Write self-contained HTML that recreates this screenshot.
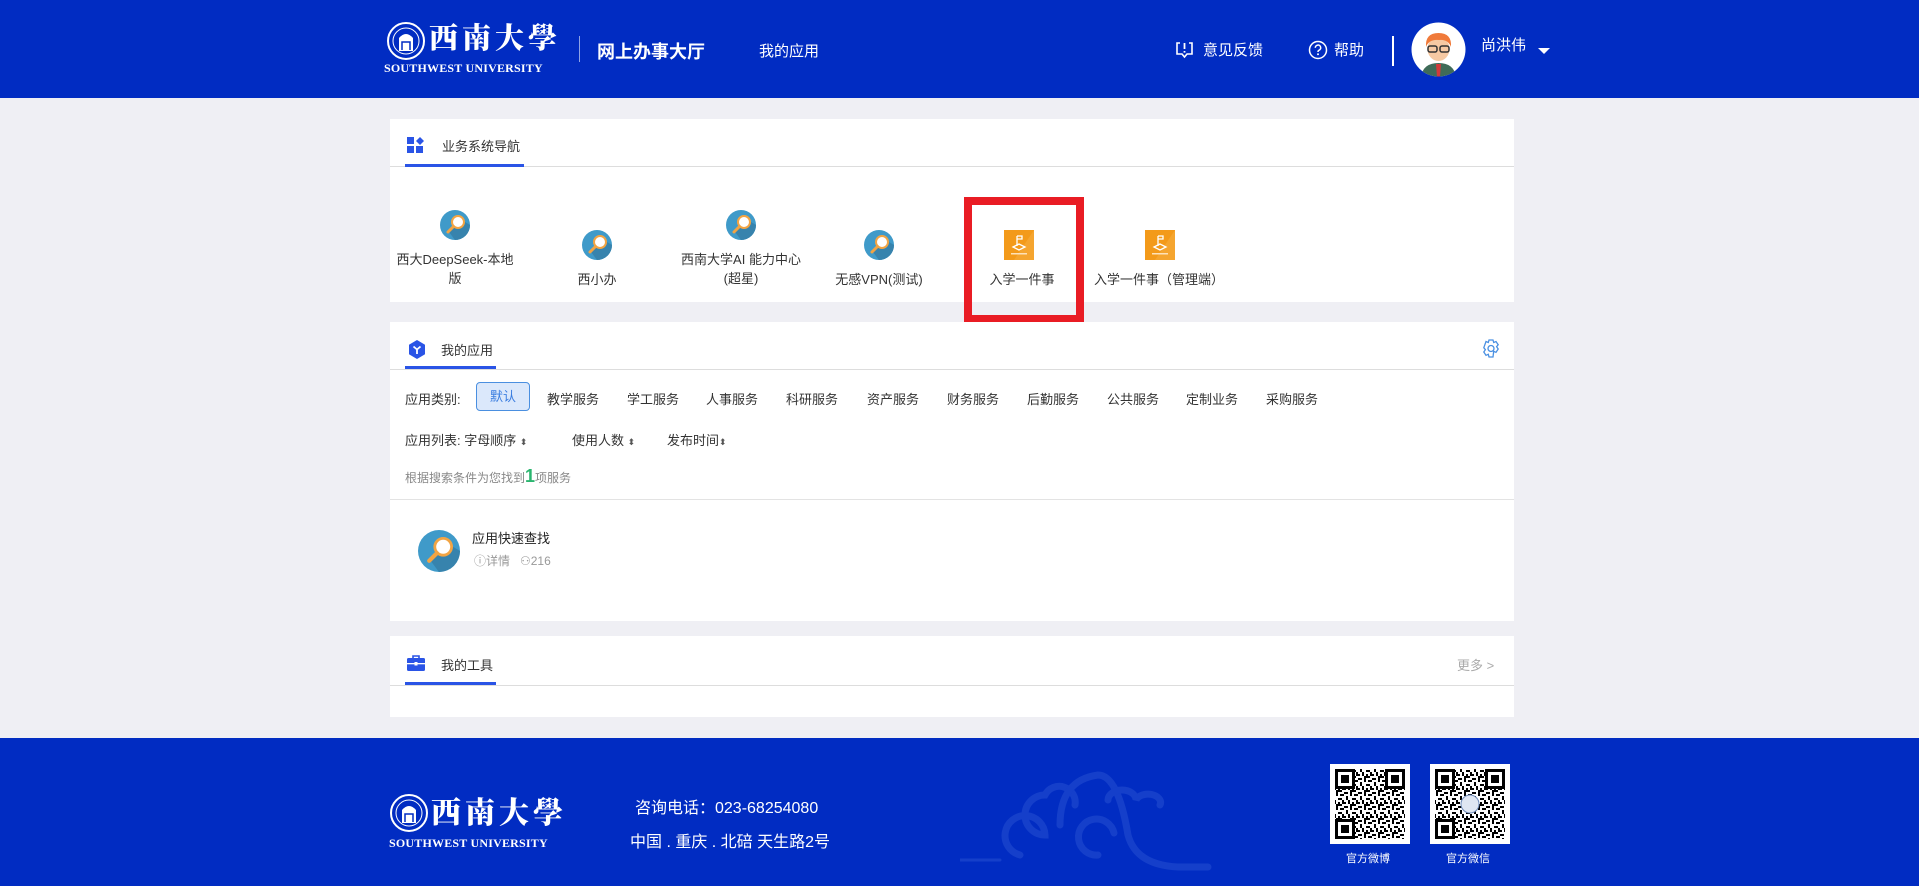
<!DOCTYPE html>
<html><head><meta charset="utf-8"><style>
*{margin:0;padding:0;box-sizing:border-box}
body{width:1919px;height:886px;background:#efeff4;font-family:"Liberation Sans","Noto Sans CJK SC",sans-serif;position:relative;overflow:hidden;color:#333}
.a{position:absolute;white-space:nowrap}
.hd{position:absolute;left:0;top:0;width:1919px;height:98px;background:#012cc2}
.ft{position:absolute;left:0;top:738px;width:1919px;height:148px;background:#012cc2}
.card{position:absolute;left:390px;width:1124px;background:#fff}
.w{color:#fff}
.t13{font-size:13px}
.cat{position:absolute;top:389px;font-size:13px;color:#333}
.logo{font-family:"Noto Serif CJK SC",serif;font-weight:900;color:#fff;letter-spacing:4px}
.sw{font-family:"Liberation Serif",serif;font-weight:bold;color:#fff;font-size:12px;letter-spacing:.2px}
.it{position:absolute;text-align:center;font-size:13px;color:#333;line-height:19px;width:140px}
</style></head><body>
<div class="hd"></div>
<svg class="a" style="left:386px;top:21px" width="40" height="40" viewBox="0 0 40 40"><circle cx="20" cy="20" r="18" fill="none" stroke="#fff" stroke-width="2"/><circle cx="20" cy="20" r="13" fill="none" stroke="#fff" stroke-width="1"/><path d="M13 30V17q7-8 14 0v13z" fill="#fff"/><path d="M16 29v-8h8v8" fill="none" stroke="#012cc2" stroke-width="1.5"/></svg>
<div class="a logo" style="left:429px;top:18px;font-size:29px;line-height:38px">西南大學</div>
<div class="a sw" style="left:384px;top:61px">SOUTHWEST UNIVERSITY</div>
<div class="a" style="left:579px;top:36px;width:1px;height:26px;background:#8fa3e6"></div>
<div class="a w" style="left:597px;top:38px;font-size:18px;font-weight:bold">网上办事大厅</div>
<div class="a w" style="left:759px;top:40px;font-size:15px">我的应用</div>
<svg class="a" style="left:1175px;top:41px" width="19" height="18" viewBox="0 0 19 18"><path d="M5 2H2v11h5l2.5 3 2.5-3h5V2h-3" fill="none" stroke="#fff" stroke-width="1.6"/><path d="M9.5 2v6M9.5 10v1.6" stroke="#fff" stroke-width="1.8"/></svg>
<div class="a w" style="left:1203px;top:39px;font-size:15px">意见反馈</div>
<svg class="a" style="left:1308px;top:40px" width="20" height="20" viewBox="0 0 20 20"><circle cx="10" cy="10" r="8.5" fill="none" stroke="#fff" stroke-width="1.5"/><path d="M7.3 7.8a2.7 2.7 0 1 1 3.6 2.5c-.8.3-.9.8-.9 1.7" fill="none" stroke="#fff" stroke-width="1.5"/><circle cx="10" cy="14.3" r="1" fill="#fff"/></svg>
<div class="a w" style="left:1334px;top:39px;font-size:15px">帮助</div>
<div class="a" style="left:1392px;top:36px;width:1.5px;height:30px;background:#fff"></div>
<svg class="a" style="left:1411px;top:22px" width="55" height="55" viewBox="0 0 55 55"><defs><clipPath id="c"><circle cx="27.5" cy="27.5" r="27"/></clipPath></defs><circle cx="27.5" cy="27.5" r="27" fill="#fff"/><g clip-path="url(#c)"><path d="M10 55q2-14 17.5-14T45 55z" fill="#3f6b58"/><path d="M25 42h5l-1 13h-3z" fill="#d23a3a"/><ellipse cx="27.5" cy="27" rx="11" ry="12" fill="#f6c9a3"/><path d="M15 25q-1-14 12.5-14T40 25q-3-8-12-7-10-1-13 7z" fill="#f07a3a"/><rect x="17" y="24" width="9" height="6" rx="2" fill="none" stroke="#333" stroke-width="1.5"/><rect x="29" y="24" width="9" height="6" rx="2" fill="none" stroke="#333" stroke-width="1.5"/></g></svg>
<div class="a w" style="left:1481px;top:34px;font-size:15px">尚洪伟</div>
<div class="a" style="left:1538px;top:48px;border-left:6px solid transparent;border-right:6px solid transparent;border-top:6px solid #fff"></div>

<div class="card" style="top:119px;height:183px"></div>
<svg class="a" style="left:407px;top:137px" width="18" height="17" viewBox="0 0 18 17"><rect x="0" y="0" width="7" height="7" fill="#2a54e6"/><rect x="0" y="9" width="7" height="7" fill="#2a54e6"/><rect x="9" y="9" width="7" height="7" fill="#2a54e6"/><path d="M13 0l4 4-4 4-4-4z" fill="#2a54e6"/></svg>
<div class="a t13" style="left:442px;top:136px;color:#333">业务系统导航</div>
<div class="a" style="left:390px;top:166px;width:1124px;height:1px;background:#ddd"></div>
<div class="a" style="left:405px;top:164px;width:119px;height:3px;background:#2a54e6"></div>

<svg width="0" height="0" style="position:absolute"><defs><g id="mg"><circle cx="15" cy="15" r="15" fill="#3f9ac9"/><path d="M15 30A15 15 0 0 0 30 15L20 9 9 22z" fill="#3783ad"/><circle cx="18" cy="12" r="6" fill="#fff" stroke="#f2a443" stroke-width="2"/><path d="M13.5 16.5L8 22" stroke="#f2a443" stroke-width="3" stroke-linecap="round"/></g>
<g id="or"><rect width="30" height="30" fill="#f39a1a"/><path d="M30 0v30H10z" fill="#f7ad3e" opacity=".6"/><path d="M13 6v10M13 6h5v3h-5" stroke="#fff" stroke-width="1.3" fill="none"/><path d="M9 17l6-3 6 3-6 3z" fill="none" stroke="#fff" stroke-width="1.3"/><rect x="7" y="23" width="16" height="1.5" fill="#fde1b8"/></g>
<pattern id="qr" width="14" height="14" patternUnits="userSpaceOnUse"><rect width="14" height="14" fill="#fff"/><rect x="0" y="0" width="4" height="2" fill="#000"/><rect x="6" y="0" width="2" height="4" fill="#000"/><rect x="10" y="2" width="4" height="2" fill="#000"/><rect x="2" y="4" width="2" height="4" fill="#000"/><rect x="8" y="6" width="4" height="2" fill="#000"/><rect x="0" y="10" width="2" height="2" fill="#000"/><rect x="4" y="8" width="2" height="4" fill="#000"/><rect x="6" y="12" width="6" height="2" fill="#000"/><rect x="12" y="8" width="2" height="4" fill="#000"/><rect x="8" y="10" width="2" height="2" fill="#000"/></pattern>
<g id="qrc"><rect width="80" height="80" fill="#fff"/><rect x="5" y="5" width="70" height="70" fill="url(#qr)"/><g fill="none" stroke="#000" stroke-width="3"><rect x="6.5" y="6.5" width="17" height="17" fill="#fff"/><rect x="56.5" y="6.5" width="17" height="17" fill="#fff"/><rect x="6.5" y="56.5" width="17" height="17" fill="#fff"/></g><rect x="11" y="11" width="8" height="8"/><rect x="61" y="11" width="8" height="8"/><rect x="11" y="61" width="8" height="8"/></g></defs></svg>

<svg class="a" style="left:440px;top:210px" width="30" height="30"><use href="#mg"/></svg>
<div class="it" style="left:385px;top:250px">西大DeepSeek-本地<br>版</div>
<svg class="a" style="left:582px;top:230px" width="30" height="30"><use href="#mg"/></svg>
<div class="it" style="left:527px;top:270px">西小办</div>
<svg class="a" style="left:726px;top:210px" width="30" height="30"><use href="#mg"/></svg>
<div class="it" style="left:671px;top:250px">西南大学AI 能力中心<br>(超星)</div>
<svg class="a" style="left:864px;top:230px" width="30" height="30"><use href="#mg"/></svg>
<div class="it" style="left:809px;top:270px">无感VPN(测试)</div>
<svg class="a" style="left:1004px;top:230px" width="30" height="30"><use href="#or"/></svg>
<div class="it" style="left:952px;top:270px">入学一件事</div>
<svg class="a" style="left:1145px;top:230px" width="30" height="30"><use href="#or"/></svg>
<div class="it" style="left:1079px;top:270px;width:160px">入学一件事（管理端）</div>
<div class="a" style="left:964px;top:197px;width:120px;height:126px;border:8px solid #e91c24"></div>

<div class="card" style="top:322px;height:299px"></div>
<svg class="a" style="left:408px;top:340px" width="18" height="19" viewBox="0 0 18 19"><path d="M9 0l8 4.7v9.6L9 19 1 14.3V4.7z" fill="#2a54e6"/><path d="M5.5 6.5L9 9.5l3.5-3M9 9.5V14" stroke="#fff" stroke-width="1.8" fill="none"/></svg>
<div class="a t13" style="left:441px;top:340px">我的应用</div>
<div class="a" style="left:390px;top:369px;width:1124px;height:1px;background:#ddd"></div>
<div class="a" style="left:405px;top:366px;width:91px;height:3px;background:#2a54e6"></div>
<svg class="a" style="left:1481px;top:339px" width="20" height="19" viewBox="0 0 20 19"><path d="M8 1h4l.7 2.5 2.3-1 2.2 3.2-1.6 2 1.6 2.3-2.2 3.3-2.3-1L12 18H8l-.7-2.7-2.3 1-2.2-3.3 1.6-2.3-1.6-2L5 2.5l2.3 1z" fill="none" stroke="#4a90e2" stroke-width="1.3"/><circle cx="10" cy="9.5" r="3" fill="none" stroke="#4a90e2" stroke-width="1.3"/></svg>
<div class="cat" style="left:405px">应用类别:</div>
<div class="a" style="left:476px;top:382px;width:54px;height:29px;background:#dbe8fb;border:1px solid #4a8fe0;border-radius:4px;color:#3a7de0;font-size:13px;text-align:center;line-height:27px">默认</div>
<div class="cat" style="left:547px">教学服务</div>
<div class="cat" style="left:627px">学工服务</div>
<div class="cat" style="left:706px">人事服务</div>
<div class="cat" style="left:786px">科研服务</div>
<div class="cat" style="left:867px">资产服务</div>
<div class="cat" style="left:947px">财务服务</div>
<div class="cat" style="left:1027px">后勤服务</div>
<div class="cat" style="left:1107px">公共服务</div>
<div class="cat" style="left:1186px">定制业务</div>
<div class="cat" style="left:1266px">采购服务</div>
<div class="cat" style="left:405px;top:430px">应用列表:&nbsp;字母顺序 <span style="font-size:9px;color:#555">⬍</span></div>
<div class="cat" style="left:572px;top:430px">使用人数 <span style="font-size:9px;color:#555">⬍</span></div>
<div class="cat" style="left:667px;top:430px">发布时间<span style="font-size:9px;color:#555">⬍</span></div>
<div class="a" style="left:405px;top:466px;font-size:12px;color:#888">根据搜索条件为您找到<b style="color:#2ab56f;font-size:18px">1</b>项服务</div>
<div class="a" style="left:390px;top:499px;width:1124px;height:1px;background:#e3e3e3"></div>
<svg class="a" style="left:418px;top:530px" width="42" height="42" viewBox="0 0 30 30"><use href="#mg"/></svg>
<div class="a t13" style="left:472px;top:528px;color:#222">应用快速查找</div>
<div class="a" style="left:474px;top:552px;font-size:12px;color:#999">ⓘ详情 &nbsp;&nbsp;⚇216</div>

<div class="card" style="top:636px;height:81px"></div>
<svg class="a" style="left:407px;top:655px" width="18" height="16" viewBox="0 0 18 16"><rect x="0" y="3" width="18" height="13" rx="1.5" fill="#2a54e6"/><path d="M6 3V1h6v2" fill="none" stroke="#2a54e6" stroke-width="1.6"/><rect x="0" y="8" width="18" height="1.3" fill="#fff"/><rect x="7.5" y="7" width="3" height="3.5" fill="#fff"/></svg>
<div class="a t13" style="left:441px;top:655px">我的工具</div>
<div class="a" style="left:390px;top:685px;width:1124px;height:1px;background:#ddd"></div>
<div class="a" style="left:405px;top:682px;width:91px;height:3px;background:#2a54e6"></div>
<div class="a" style="left:1457px;top:655px;font-size:13px;color:#aaa">更多 &gt;</div>

<div class="ft"></div>
<svg class="a" style="left:960px;top:755px" width="260" height="120" viewBox="0 0 260 120" fill="none" stroke="#153fca" stroke-width="7" stroke-linecap="round"><path d="M60 100a20 20 0 1 1 25-20 20 20 0 0 1 0-40 16 16 0 0 1 30 10"/><path d="M100 70q0-45 38-50 20 0 30 60 8 30 50 32h30"/><path d="M138 100a18 18 0 1 1 16-22"/><path d="M148 45a14 10 0 0 1 28 0 12 8 0 0 1 24 5"/><path d="M10 125h240M0 105h40" stroke-width="3"/></svg>
<svg class="a" style="left:389px;top:793px" width="40" height="40" viewBox="0 0 40 40"><circle cx="20" cy="20" r="18" fill="none" stroke="#fff" stroke-width="2"/><circle cx="20" cy="20" r="13" fill="none" stroke="#fff" stroke-width="1"/><path d="M13 30V17q7-8 14 0v13z" fill="#fff"/><path d="M16 29v-8h8v8" fill="none" stroke="#012cc2" stroke-width="1.5"/></svg>
<div class="a logo" style="left:431px;top:790px;font-size:30px;line-height:40px">西南大學</div>
<div class="a sw" style="left:389px;top:836px">SOUTHWEST UNIVERSITY</div>
<div class="a w" style="left:635px;top:794px;font-size:16px">咨询电话：023-68254080</div>
<div class="a w" style="left:630px;top:828px;font-size:16px">中国 . 重庆 . 北碚 天生路2号</div>
<svg class="a" style="left:1330px;top:764px" width="80" height="80"><use href="#qrc"/></svg>
<svg class="a" style="left:1430px;top:764px" width="80" height="80"><use href="#qrc"/><circle cx="40" cy="40" r="9" fill="#dfe6f2" stroke="#6d8ab8"/></svg>
<div class="a w" style="left:1346px;top:850px;font-size:11px">官方微博</div>
<div class="a w" style="left:1446px;top:850px;font-size:11px">官方微信</div>
</body></html>
